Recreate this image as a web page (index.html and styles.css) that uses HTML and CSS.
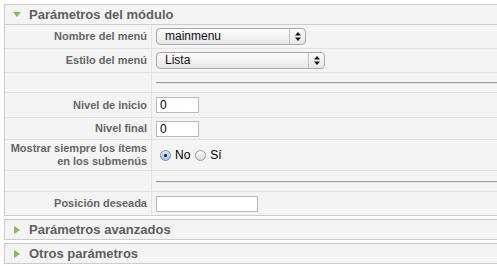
FILE: index.html
```html
<!DOCTYPE html>
<html lang="es">
  <head>
    <meta charset="UTF-8" />
    <title>Parámetros del módulo</title>
    <link rel="stylesheet" href="styles.css">
  </head>
  <body>
    <div class="pane open">
      <h3 class="pane-title"><span class="arrow down"></span>Parámetros del módulo</h3>
      <div class="params">
        <div class="row r1">
          <div class="key">Nombre del menú</div>
          <div class="value">
            <div class="select w150">
              <span class="sel-text">mainmenu</span>
              <span class="sel-btn">
                <svg width="6" height="9" viewBox="0 0 6 9"><path d="M3 0 L6 3.5 L0 3.5 Z M0 5.5 L6 5.5 L3 9 Z" fill="#111"/></svg>
              </span>
            </div>
          </div>
        </div>
        <div class="row r2">
          <div class="key">Estilo del menú</div>
          <div class="value">
            <div class="select w169">
              <span class="sel-text">Lista</span>
              <span class="sel-btn">
                <svg width="6" height="9" viewBox="0 0 6 9"><path d="M3 0 L6 3.5 L0 3.5 Z M0 5.5 L6 5.5 L3 9 Z" fill="#111"/></svg>
              </span>
            </div>
          </div>
        </div>
        <div class="row r3">
          <div class="key"></div>
          <div class="value"><div class="spacer"></div></div>
        </div>
        <div class="row r4">
          <div class="key">Nivel de inicio</div>
          <div class="value"><input class="text short" type="text" value="0" /></div>
        </div>
        <div class="row r5">
          <div class="key">Nivel final</div>
          <div class="value"><input class="text short" type="text" value="0" /></div>
        </div>
        <div class="row r6">
          <div class="key">Mostrar siempre los ítems<br />en los submenús</div>
          <div class="value radios">
            <span class="radio checked"></span><span class="radio-label">No</span>
            <span class="radio"></span><span class="radio-label">Sí</span>
          </div>
        </div>
        <div class="row r7">
          <div class="key"></div>
          <div class="value"><div class="spacer"></div></div>
        </div>
        <div class="row r8">
          <div class="key">Posición deseada</div>
          <div class="value"><input class="text long" type="text" value="" /></div>
        </div>
      </div>
    </div>

    <div class="pane">
      <h3 class="pane-title"><span class="arrow right"></span>Parámetros avanzados</h3>
    </div>

    <div class="pane">
      <h3 class="pane-title"><span class="arrow right"></span>Otros parámetros</h3>
    </div>
  </body>
</html>
```

FILE: styles.css
```css
body {
  margin: 0;
  padding: 4px 0 0 4px;
  background-color: white;
  font-family: "Liberation Sans", Arial, sans-serif;
  overflow: hidden;
}

.pane {
  margin-right: -20px;
  margin-bottom: 3px;
  background-color: #f4f4f4;
  border: 1px solid #ccc;
}

.pane-title {
  display: flex;
  align-items: center;
  margin: 0;
  height: 19px;
  padding-left: 8px;
  font-size: 13px;
  font-weight: bold;
  color: #5e5e5e;
}

.open .pane-title {
  border-bottom: 1px solid #ccc;
}

.arrow {
  display: inline-block;
  width: 0;
  height: 0;
  margin-right: 8px;
}

.arrow.down {
  border-left: 4px solid transparent;
  border-right: 4px solid transparent;
  border-top: 5px solid #7fbf4d;
}

.arrow.right {
  margin-left: 1px;
  margin-right: 9px;
  border-top: 4px solid transparent;
  border-bottom: 4px solid transparent;
  border-left: 6px solid #7fbf4d;
}

.row {
  display: grid;
  grid-template-columns: 147px 1fr;
  border-bottom: 1px solid #e2e2e2;
}

.row.r8 {
  border-bottom: none;
}

.r1, .r2 { height: 23px; }
.r3 { height: 19px; }
.r4 { height: 24px; }
.r5 { height: 21px; }
.r6 { height: 30px; }
.r7 { height: 20px; }
.r8 { height: 23px; }

.key {
  display: flex;
  align-items: center;
  justify-content: flex-end;
  text-align: right;
  padding-right: 4px;
  border-right: 1px solid #e2e2e2;
  font-size: 11px;
  line-height: 13px;
  font-weight: bold;
  color: #666;
}

.value {
  display: flex;
  align-items: center;
  padding-left: 4px;
}

.select {
  display: flex;
  height: 15px;
  border: 1px solid #a8a8a8;
  border-radius: 4px;
  background: linear-gradient(#fdfdfd, #e6e6e6);
  box-shadow: 0 1px 0 #fff;
  font-size: 12px;
  color: #111;
}

.w150 { width: 148px; }
.w169 { width: 167px; }

.sel-text {
  flex: 1;
  padding-left: 8px;
  line-height: 15px;
}

.sel-btn {
  display: flex;
  align-items: center;
  justify-content: center;
  width: 15px;
  border-left: 1px solid #c4c4c4;
}

.spacer {
  flex: 1;
  margin-top: 1px;
  border-top: 1px solid #9a9a9a;
  border-bottom: 1px solid #e6e6e6;
}

input.text {
  box-sizing: border-box;
  height: 16px;
  margin: 0;
  padding: 0 3px;
  border: 1px solid #bbb;
  background-color: white;
  font-family: "Liberation Sans", Arial, sans-serif;
  font-size: 12px;
  color: #000;
}

input.short { width: 43px; }
input.long { width: 102px; }

.radios {
  padding-left: 8px;
  font-size: 12px;
  color: #000;
}

.radio {
  box-sizing: border-box;
  display: inline-flex;
  align-items: center;
  justify-content: center;
  width: 11px;
  height: 11px;
  border: 1px solid #9a9a9a;
  border-radius: 50%;
  background: linear-gradient(#fafafa, #dcdcdc);
}

.radio.checked {
  border-color: #6d8fb3;
  background: linear-gradient(#d6e6f7, #a9c7e8);
}

.radio.checked::after {
  content: "";
  width: 3px;
  height: 3px;
  border-radius: 50%;
  background-color: #111;
}

.radio-label {
  margin: 0 5px 0 4px;
}
```
